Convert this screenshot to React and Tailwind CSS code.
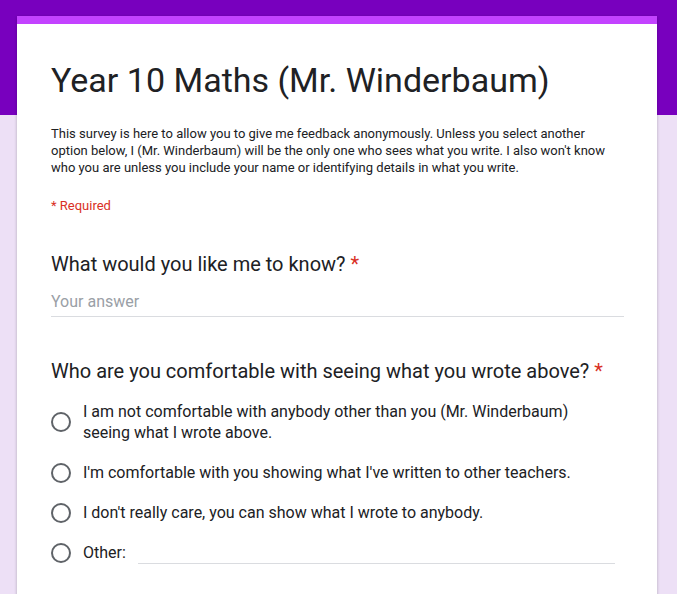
import React from 'react';

const options = [
  'I am not comfortable with anybody other than you (Mr. Winderbaum) seeing what I wrote above.',
  "I'm comfortable with you showing what I've written to other teachers.",
  "I don't really care, you can show what I wrote to anybody.",
];

function Radio() {
  return <span className="w-5 h-5 shrink-0 rounded-full border-2 border-[#5f6368]" />;
}

export default function App() {
  return (
    <div
      className="min-h-[594px] bg-[#ede0f6] relative"
      style={{ fontFamily: 'Roboto, "Liberation Sans", sans-serif' }}
    >
      {/* purple header band */}
      <div className="absolute top-0 left-0 right-0 h-[115px] bg-[#7800be]" />

      <div className="relative pt-4 pl-[17px] w-[657px]">
        <div className="bg-white overflow-hidden shadow-[0_1px_3px_rgba(0,0,0,0.25)]">
          <div className="h-2 bg-[#c342ff]" />
          <div className="pl-[34px] pr-[33px] pb-10">
            {/* Title */}
            <h1 className="pt-[34px] text-[34px] leading-[44px] text-[#202124]">
              Year 10 Maths (Mr. Winderbaum)
            </h1>
            <p className="mt-[23px] text-[13px] leading-[17px] text-[#202124] pr-4">
              This survey is here to allow you to give me feedback anonymously. Unless you select another
              option below, I (Mr. Winderbaum) will be the only one who sees what you write. I also won't know
              who you are unless you include your name or identifying details in what you write.
            </p>
            <div className="mt-[21px] text-[13px] leading-[17px] text-[#d93025]">* Required</div>

            {/* Question 1 */}
            <div className="mt-9 text-[20px] leading-7 text-[#202124]">
              What would you like me to know? <span className="text-[#d93025]">*</span>
            </div>
            <div className="mt-3 h-[27px] border-b border-[#dadce0] text-[16px] leading-6 text-[#9aa0a6]">
              Your answer
            </div>

            {/* Question 2 */}
            <div className="mt-10 text-[20px] leading-7 text-[#202124]">
              Who are you comfortable with seeing what you wrote above?{' '}
              <span className="text-[#d93025]">*</span>
            </div>
            <div className="mt-4 flex flex-col gap-[19px]">
              {options.map((o) => (
                <div key={o} className="flex items-center gap-3">
                  <Radio />
                  <span className="text-[16px] leading-[21px] text-[#202124] pr-12">{o}</span>
                </div>
              ))}
              <div className="flex items-center gap-3">
                <Radio />
                <span className="text-[16px] leading-[21px] text-[#202124]">Other:</span>
                <div className="mr-[9px] flex-1 h-[21px] border-b border-[#dadce0] translate-y-[1px]" />
              </div>
            </div>
          </div>
        </div>
      </div>
    </div>
  );
}
